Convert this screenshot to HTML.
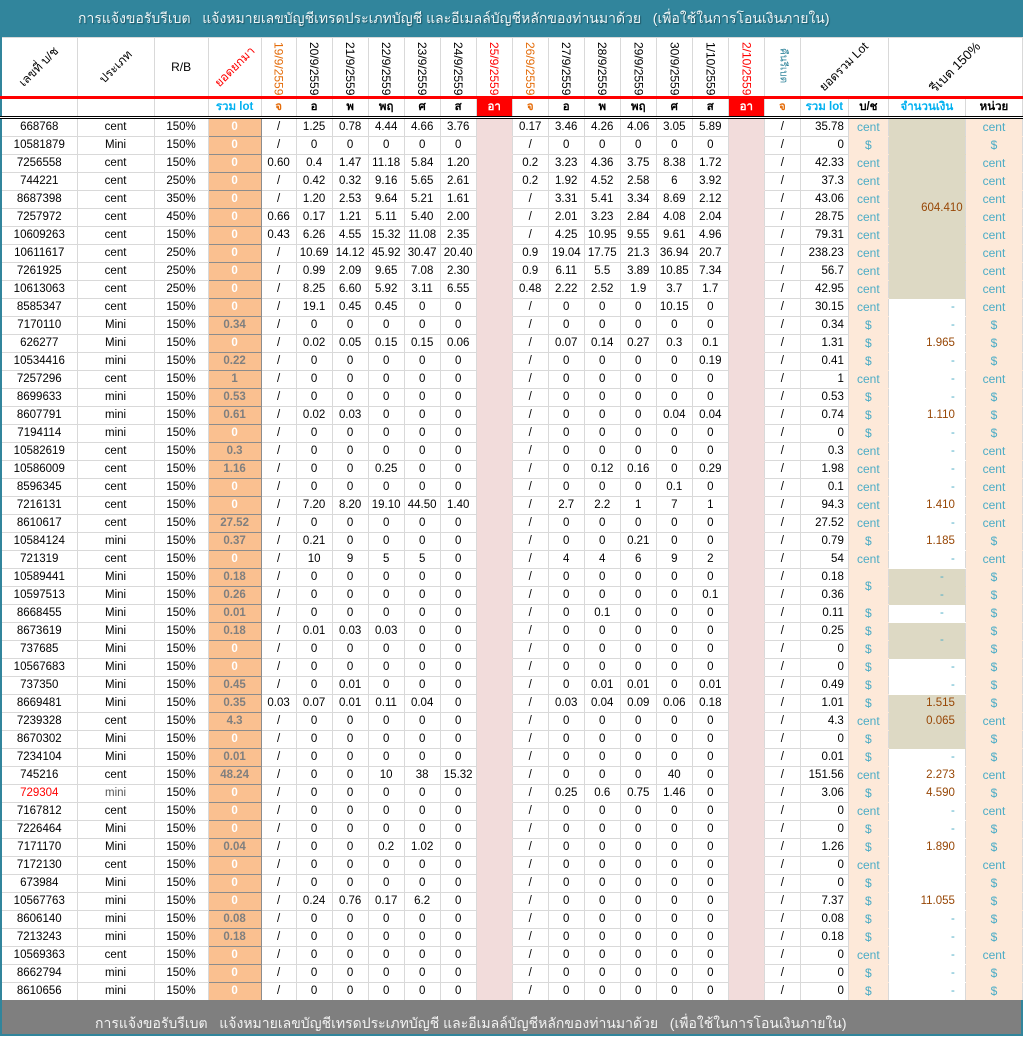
<!DOCTYPE html>
<html><head><meta charset="utf-8">
<style>
*{box-sizing:border-box}
body{margin:0;width:1023px;height:1036px;overflow:hidden;background:#fff;font-family:"Liberation Sans","DejaVu Sans","Noto Sans CJK SC",sans-serif;font-size:11.5px;color:#000;position:relative}
.title{position:absolute;left:0;top:0;width:1023px;height:37px;background:#31859c;color:#eef6f8;font-size:14px;line-height:37px;padding-left:78px;white-space:nowrap;text-shadow:1px 1px 1px #1d5563}
.foot{position:absolute;left:0;top:1000px;width:1023px;height:36px;background:#7f7f7f;color:#f2f2f2;font-size:14px;line-height:46px;padding-left:93px;white-space:nowrap;border-left:2px solid #31859c;border-bottom:2px solid #31859c;border-right:2px solid #31859c}
table{position:absolute;left:0;top:37px;border-collapse:collapse;table-layout:fixed;width:1023px;border-left:2px solid #31859c}
td{padding:0;border:1px solid #d9d9d9;text-align:center;white-space:nowrap;overflow:hidden;height:18px;line-height:17px}
thead tr.h1 td{height:60px;vertical-align:top;border-bottom:3px solid #ff0000;position:relative}
thead tr.h2 td{height:20px;font-weight:bold;border-bottom:3px double #000;line-height:17px}
.v{writing-mode:vertical-rl;padding-top:4px;font-size:12px;line-height:34px;margin:0 auto}
.dg{position:absolute;left:50%;top:50%;transform:translate(-50%,-50%) rotate(-45deg);white-space:nowrap;font-size:12px}
.or{color:#e46c0a}.rd{color:#ff0000}
tbody td:nth-child(4){background:#fac090;border:1px solid #8c8c8c;color:#fff;font-weight:bold}
tbody td:nth-child(4).g{color:#7f7f7f}
tbody td:nth-child(11),tbody td:nth-child(18){background:#f2dcdb;border-top-color:#f2dcdb;border-bottom-color:#f2dcdb}
tbody td:nth-child(20){text-align:right;padding-right:4px}
tbody td:nth-child(21),tbody td:nth-child(23){background:#fde9d9;border-top-color:#fde9d9;border-bottom-color:#fde9d9;color:#4bacc6;font-size:12px}
tbody td:nth-child(21){overflow:visible}
tbody td:nth-child(22){text-align:right;padding-right:10px;color:#4bacc6;border-top-color:#fff;border-bottom-color:#fff;overflow:visible}
tbody td:nth-child(22).n{color:#974706}
tbody td:nth-child(22).k{background:#ddd9c4;border-top-color:#ddd9c4;border-bottom-color:#ddd9c4}
tbody td.m{text-align:center;padding:0 0 0 30px}
.dn{position:relative;top:9px}
</style></head><body>
<div class="title">การแจ้งขอรับรีเบต&nbsp;&nbsp; แจ้งหมายเลขบัญชีเทรดประเภทบัญชี และอีเมลล์บัญชีหลักของท่านมาด้วย&nbsp;&nbsp; (เพื่อใช้ในการโอนเงินภายใน)</div>
<table>
<colgroup><col style="width:76px"><col style="width:77px"><col style="width:54px"><col style="width:53px"><col style="width:35px"><col span="14" style="width:36px"><col style="width:48px"><col style="width:40px"><col style="width:77px"><col style="width:57px"></colgroup>
<thead>
<tr class="h1"><td><span class="dg">เลขที่ บ/ช</span></td><td><span class="dg">ประเภท</span></td><td style="vertical-align:middle;font-size:12px">R/B</td><td><span class="dg rd">ยอดยกมา</span></td>
<td><div class="v or">19/9/2559</div></td><td><div class="v">20/9/2559</div></td><td><div class="v">21/9/2559</div></td><td><div class="v">22/9/2559</div></td><td><div class="v">23/9/2559</div></td><td><div class="v">24/9/2559</div></td><td><div class="v rd">25/9/2559</div></td><td><div class="v or">26/9/2559</div></td><td><div class="v">27/9/2559</div></td><td><div class="v">28/9/2559</div></td><td><div class="v">29/9/2559</div></td><td><div class="v">30/9/2559</div></td><td><div class="v">1/10/2559</div></td><td><div class="v rd">2/10/2559</div></td><td><div class="v" style="color:#31859c;font-size:10px;padding-top:10px">คืนรีเบต</div></td>
<td colspan="2"><span class="dg">ยอดรวม Lot</span></td><td colspan="2"><span class="dg" style="font-size:13px">รีเบต 150%</span></td></tr>
<tr class="h2"><td></td><td></td><td></td><td style="color:#00b0f0">รวม lot</td><td class="or">จ</td><td>อ</td><td>พ</td><td>พฤ</td><td>ศ</td><td>ส</td><td style="background:#ff0000;color:#fff">อา</td><td class="or">จ</td><td>อ</td><td>พ</td><td>พฤ</td><td>ศ</td><td>ส</td><td style="background:#ff0000;color:#fff">อา</td><td class="or">จ</td><td style="color:#00b0f0">รวม lot</td><td>บ/ช</td><td style="color:#00b0f0">จำนวนเงิน</td><td>หน่วย</td></tr>
</thead>
<tbody>
<tr><td>668768<td>cent<td>150%<td>0<td>/<td>1.25<td>0.78<td>4.44<td>4.66<td>3.76<td><td>0.17<td>3.46<td>4.26<td>4.06<td>3.05<td>5.89<td><td>/<td>35.78<td>cent<td class="k"><td>cent</tr>
<tr><td>10581879<td>Mini<td>150%<td>0<td>/<td>0<td>0<td>0<td>0<td>0<td><td>/<td>0<td>0<td>0<td>0<td>0<td><td>/<td>0<td>$<td class="k"><td>$</tr>
<tr><td>7256558<td>cent<td>150%<td>0<td>0.60<td>0.4<td>1.47<td>11.18<td>5.84<td>1.20<td><td>0.2<td>3.23<td>4.36<td>3.75<td>8.38<td>1.72<td><td>/<td>42.33<td>cent<td class="k"><td>cent</tr>
<tr><td>744221<td>cent<td>250%<td>0<td>/<td>0.42<td>0.32<td>9.16<td>5.65<td>2.61<td><td>0.2<td>1.92<td>4.52<td>2.58<td>6<td>3.92<td><td>/<td>37.3<td>cent<td class="k"><td>cent</tr>
<tr><td>8687398<td>cent<td>350%<td>0<td>/<td>1.20<td>2.53<td>9.64<td>5.21<td>1.61<td><td>/<td>3.31<td>5.41<td>3.34<td>8.69<td>2.12<td><td>/<td>43.06<td>cent<td class="k"><td>cent</tr>
<tr><td>7257972<td>cent<td>450%<td>0<td>0.66<td>0.17<td>1.21<td>5.11<td>5.40<td>2.00<td><td>/<td>2.01<td>3.23<td>2.84<td>4.08<td>2.04<td><td>/<td>28.75<td>cent<td class="k n m"><span style="position:relative;top:-9px">604.410</span><td>cent</tr>
<tr><td>10609263<td>cent<td>150%<td>0<td>0.43<td>6.26<td>4.55<td>15.32<td>11.08<td>2.35<td><td>/<td>4.25<td>10.95<td>9.55<td>9.61<td>4.96<td><td>/<td>79.31<td>cent<td class="k"><td>cent</tr>
<tr><td>10611617<td>cent<td>250%<td>0<td>/<td>10.69<td>14.12<td>45.92<td>30.47<td>20.40<td><td>0.9<td>19.04<td>17.75<td>21.3<td>36.94<td>20.7<td><td>/<td>238.23<td>cent<td class="k"><td>cent</tr>
<tr><td>7261925<td>cent<td>250%<td>0<td>/<td>0.99<td>2.09<td>9.65<td>7.08<td>2.30<td><td>0.9<td>6.11<td>5.5<td>3.89<td>10.85<td>7.34<td><td>/<td>56.7<td>cent<td class="k"><td>cent</tr>
<tr><td>10613063<td>cent<td>250%<td>0<td>/<td>8.25<td>6.60<td>5.92<td>3.11<td>6.55<td><td>0.48<td>2.22<td>2.52<td>1.9<td>3.7<td>1.7<td><td>/<td>42.95<td>cent<td class="k"><td>cent</tr>
<tr><td>8585347<td>cent<td>150%<td>0<td>/<td>19.1<td>0.45<td>0.45<td>0<td>0<td><td>/<td>0<td>0<td>0<td>10.15<td>0<td><td>/<td>30.15<td>cent<td>-<td>cent</tr>
<tr><td>7170110<td>Mini<td>150%<td class="g">0.34<td>/<td>0<td>0<td>0<td>0<td>0<td><td>/<td>0<td>0<td>0<td>0<td>0<td><td>/<td>0.34<td>$<td>-<td>$</tr>
<tr><td>626277<td>Mini<td>150%<td>0<td>/<td>0.02<td>0.05<td>0.15<td>0.15<td>0.06<td><td>/<td>0.07<td>0.14<td>0.27<td>0.3<td>0.1<td><td>/<td>1.31<td>$<td class="n">1.965<td>$</tr>
<tr><td>10534416<td>mini<td>150%<td class="g">0.22<td>/<td>0<td>0<td>0<td>0<td>0<td><td>/<td>0<td>0<td>0<td>0<td>0.19<td><td>/<td>0.41<td>$<td>-<td>$</tr>
<tr><td>7257296<td>cent<td>150%<td class="g">1<td>/<td>0<td>0<td>0<td>0<td>0<td><td>/<td>0<td>0<td>0<td>0<td>0<td><td>/<td>1<td>cent<td>-<td>cent</tr>
<tr><td>8699633<td>mini<td>150%<td class="g">0.53<td>/<td>0<td>0<td>0<td>0<td>0<td><td>/<td>0<td>0<td>0<td>0<td>0<td><td>/<td>0.53<td>$<td>-<td>$</tr>
<tr><td>8607791<td>mini<td>150%<td class="g">0.61<td>/<td>0.02<td>0.03<td>0<td>0<td>0<td><td>/<td>0<td>0<td>0<td>0.04<td>0.04<td><td>/<td>0.74<td>$<td class="n">1.110<td>$</tr>
<tr><td>7194114<td>mini<td>150%<td>0<td>/<td>0<td>0<td>0<td>0<td>0<td><td>/<td>0<td>0<td>0<td>0<td>0<td><td>/<td>0<td>$<td>-<td>$</tr>
<tr><td>10582619<td>cent<td>150%<td class="g">0.3<td>/<td>0<td>0<td>0<td>0<td>0<td><td>/<td>0<td>0<td>0<td>0<td>0<td><td>/<td>0.3<td>cent<td>-<td>cent</tr>
<tr><td>10586009<td>cent<td>150%<td class="g">1.16<td>/<td>0<td>0<td>0.25<td>0<td>0<td><td>/<td>0<td>0.12<td>0.16<td>0<td>0.29<td><td>/<td>1.98<td>cent<td>-<td>cent</tr>
<tr><td>8596345<td>cent<td>150%<td>0<td>/<td>0<td>0<td>0<td>0<td>0<td><td>/<td>0<td>0<td>0<td>0.1<td>0<td><td>/<td>0.1<td>cent<td>-<td>cent</tr>
<tr><td>7216131<td>cent<td>150%<td>0<td>/<td>7.20<td>8.20<td>19.10<td>44.50<td>1.40<td><td>/<td>2.7<td>2.2<td>1<td>7<td>1<td><td>/<td>94.3<td>cent<td class="n">1.410<td>cent</tr>
<tr><td>8610617<td>cent<td>150%<td class="g">27.52<td>/<td>0<td>0<td>0<td>0<td>0<td><td>/<td>0<td>0<td>0<td>0<td>0<td><td>/<td>27.52<td>cent<td>-<td>cent</tr>
<tr><td>10584124<td>mini<td>150%<td class="g">0.37<td>/<td>0.21<td>0<td>0<td>0<td>0<td><td>/<td>0<td>0<td>0.21<td>0<td>0<td><td>/<td>0.79<td>$<td class="n">1.185<td>$</tr>
<tr><td>721319<td>cent<td>150%<td>0<td>/<td>10<td>9<td>5<td>5<td>0<td><td>/<td>4<td>4<td>6<td>9<td>2<td><td>/<td>54<td>cent<td>-<td>cent</tr>
<tr><td>10589441<td>Mini<td>150%<td class="g">0.18<td>/<td>0<td>0<td>0<td>0<td>0<td><td>/<td>0<td>0<td>0<td>0<td>0<td><td>/<td>0.18<td><span class="dn">$</span><td class="k m">-<td>$</tr>
<tr><td>10597513<td>Mini<td>150%<td class="g">0.26<td>/<td>0<td>0<td>0<td>0<td>0<td><td>/<td>0<td>0<td>0<td>0<td>0.1<td><td>/<td>0.36<td><td class="k m">-<td>$</tr>
<tr><td>8668455<td>Mini<td>150%<td class="g">0.01<td>/<td>0<td>0<td>0<td>0<td>0<td><td>/<td>0<td>0.1<td>0<td>0<td>0<td><td>/<td>0.11<td>$<td class="m">-<td>$</tr>
<tr><td>8673619<td>Mini<td>150%<td class="g">0.18<td>/<td>0.01<td>0.03<td>0.03<td>0<td>0<td><td>/<td>0<td>0<td>0<td>0<td>0<td><td>/<td>0.25<td>$<td class="k m"><span class="dn">-</span><td>$</tr>
<tr><td>737685<td>Mini<td>150%<td>0<td>/<td>0<td>0<td>0<td>0<td>0<td><td>/<td>0<td>0<td>0<td>0<td>0<td><td>/<td>0<td>$<td class="k"><td>$</tr>
<tr><td>10567683<td>Mini<td>150%<td>0<td>/<td>0<td>0<td>0<td>0<td>0<td><td>/<td>0<td>0<td>0<td>0<td>0<td><td>/<td>0<td>$<td>-<td>$</tr>
<tr><td>737350<td>Mini<td>150%<td class="g">0.45<td>/<td>0<td>0.01<td>0<td>0<td>0<td><td>/<td>0<td>0.01<td>0.01<td>0<td>0.01<td><td>/<td>0.49<td>$<td>-<td>$</tr>
<tr><td>8669481<td>Mini<td>150%<td class="g">0.35<td>0.03<td>0.07<td>0.01<td>0.11<td>0.04<td>0<td><td>/<td>0.03<td>0.04<td>0.09<td>0.06<td>0.18<td><td>/<td>1.01<td>$<td class="k n">1.515<td>$</tr>
<tr><td>7239328<td>cent<td>150%<td class="g">4.3<td>/<td>0<td>0<td>0<td>0<td>0<td><td>/<td>0<td>0<td>0<td>0<td>0<td><td>/<td>4.3<td>cent<td class="k n">0.065<td>cent</tr>
<tr><td>8670302<td>Mini<td>150%<td>0<td>/<td>0<td>0<td>0<td>0<td>0<td><td>/<td>0<td>0<td>0<td>0<td>0<td><td>/<td>0<td>$<td class="k"><td>$</tr>
<tr><td>7234104<td>Mini<td>150%<td class="g">0.01<td>/<td>0<td>0<td>0<td>0<td>0<td><td>/<td>0<td>0<td>0<td>0<td>0<td><td>/<td>0.01<td>$<td>-<td>$</tr>
<tr><td>745216<td>cent<td>150%<td class="g">48.24<td>/<td>0<td>0<td>10<td>38<td>15.32<td><td>/<td>0<td>0<td>0<td>40<td>0<td><td>/<td>151.56<td>cent<td class="n">2.273<td>cent</tr>
<tr><td style="color:#ff0000">729304<td style="color:#555">mini<td>150%<td>0<td>/<td>0<td>0<td>0<td>0<td>0<td><td>/<td>0.25<td>0.6<td>0.75<td>1.46<td>0<td><td>/<td>3.06<td>$<td class="n">4.590<td>$</tr>
<tr><td>7167812<td>cent<td>150%<td>0<td>/<td>0<td>0<td>0<td>0<td>0<td><td>/<td>0<td>0<td>0<td>0<td>0<td><td>/<td>0<td>cent<td>-<td>cent</tr>
<tr><td>7226464<td>Mini<td>150%<td>0<td>/<td>0<td>0<td>0<td>0<td>0<td><td>/<td>0<td>0<td>0<td>0<td>0<td><td>/<td>0<td>$<td>-<td>$</tr>
<tr><td>7171170<td>Mini<td>150%<td class="g">0.04<td>/<td>0<td>0<td>0.2<td>1.02<td>0<td><td>/<td>0<td>0<td>0<td>0<td>0<td><td>/<td>1.26<td>$<td class="n">1.890<td>$</tr>
<tr><td>7172130<td>cent<td>150%<td>0<td>/<td>0<td>0<td>0<td>0<td>0<td><td>/<td>0<td>0<td>0<td>0<td>0<td><td>/<td>0<td>cent<td><td>cent</tr>
<tr><td>673984<td>Mini<td>150%<td>0<td>/<td>0<td>0<td>0<td>0<td>0<td><td>/<td>0<td>0<td>0<td>0<td>0<td><td>/<td>0<td>$<td><td>$</tr>
<tr><td>10567763<td>mini<td>150%<td>0<td>/<td>0.24<td>0.76<td>0.17<td>6.2<td>0<td><td>/<td>0<td>0<td>0<td>0<td>0<td><td>/<td>7.37<td>$<td class="n">11.055<td>$</tr>
<tr><td>8606140<td>mini<td>150%<td class="g">0.08<td>/<td>0<td>0<td>0<td>0<td>0<td><td>/<td>0<td>0<td>0<td>0<td>0<td><td>/<td>0.08<td>$<td>-<td>$</tr>
<tr><td>7213243<td>mini<td>150%<td class="g">0.18<td>/<td>0<td>0<td>0<td>0<td>0<td><td>/<td>0<td>0<td>0<td>0<td>0<td><td>/<td>0.18<td>$<td>-<td>$</tr>
<tr><td>10569363<td>cent<td>150%<td>0<td>/<td>0<td>0<td>0<td>0<td>0<td><td>/<td>0<td>0<td>0<td>0<td>0<td><td>/<td>0<td>cent<td>-<td>cent</tr>
<tr><td>8662794<td>mini<td>150%<td>0<td>/<td>0<td>0<td>0<td>0<td>0<td><td>/<td>0<td>0<td>0<td>0<td>0<td><td>/<td>0<td>$<td>-<td>$</tr>
<tr><td>8610656<td>mini<td>150%<td>0<td>/<td>0<td>0<td>0<td>0<td>0<td><td>/<td>0<td>0<td>0<td>0<td>0<td><td>/<td>0<td>$<td>-<td>$</tr>
</tbody></table>
<div class="foot">การแจ้งขอรับรีเบต&nbsp;&nbsp; แจ้งหมายเลขบัญชีเทรดประเภทบัญชี และอีเมลล์บัญชีหลักของท่านมาด้วย&nbsp;&nbsp; (เพื่อใช้ในการโอนเงินภายใน)</div>
</body></html>
